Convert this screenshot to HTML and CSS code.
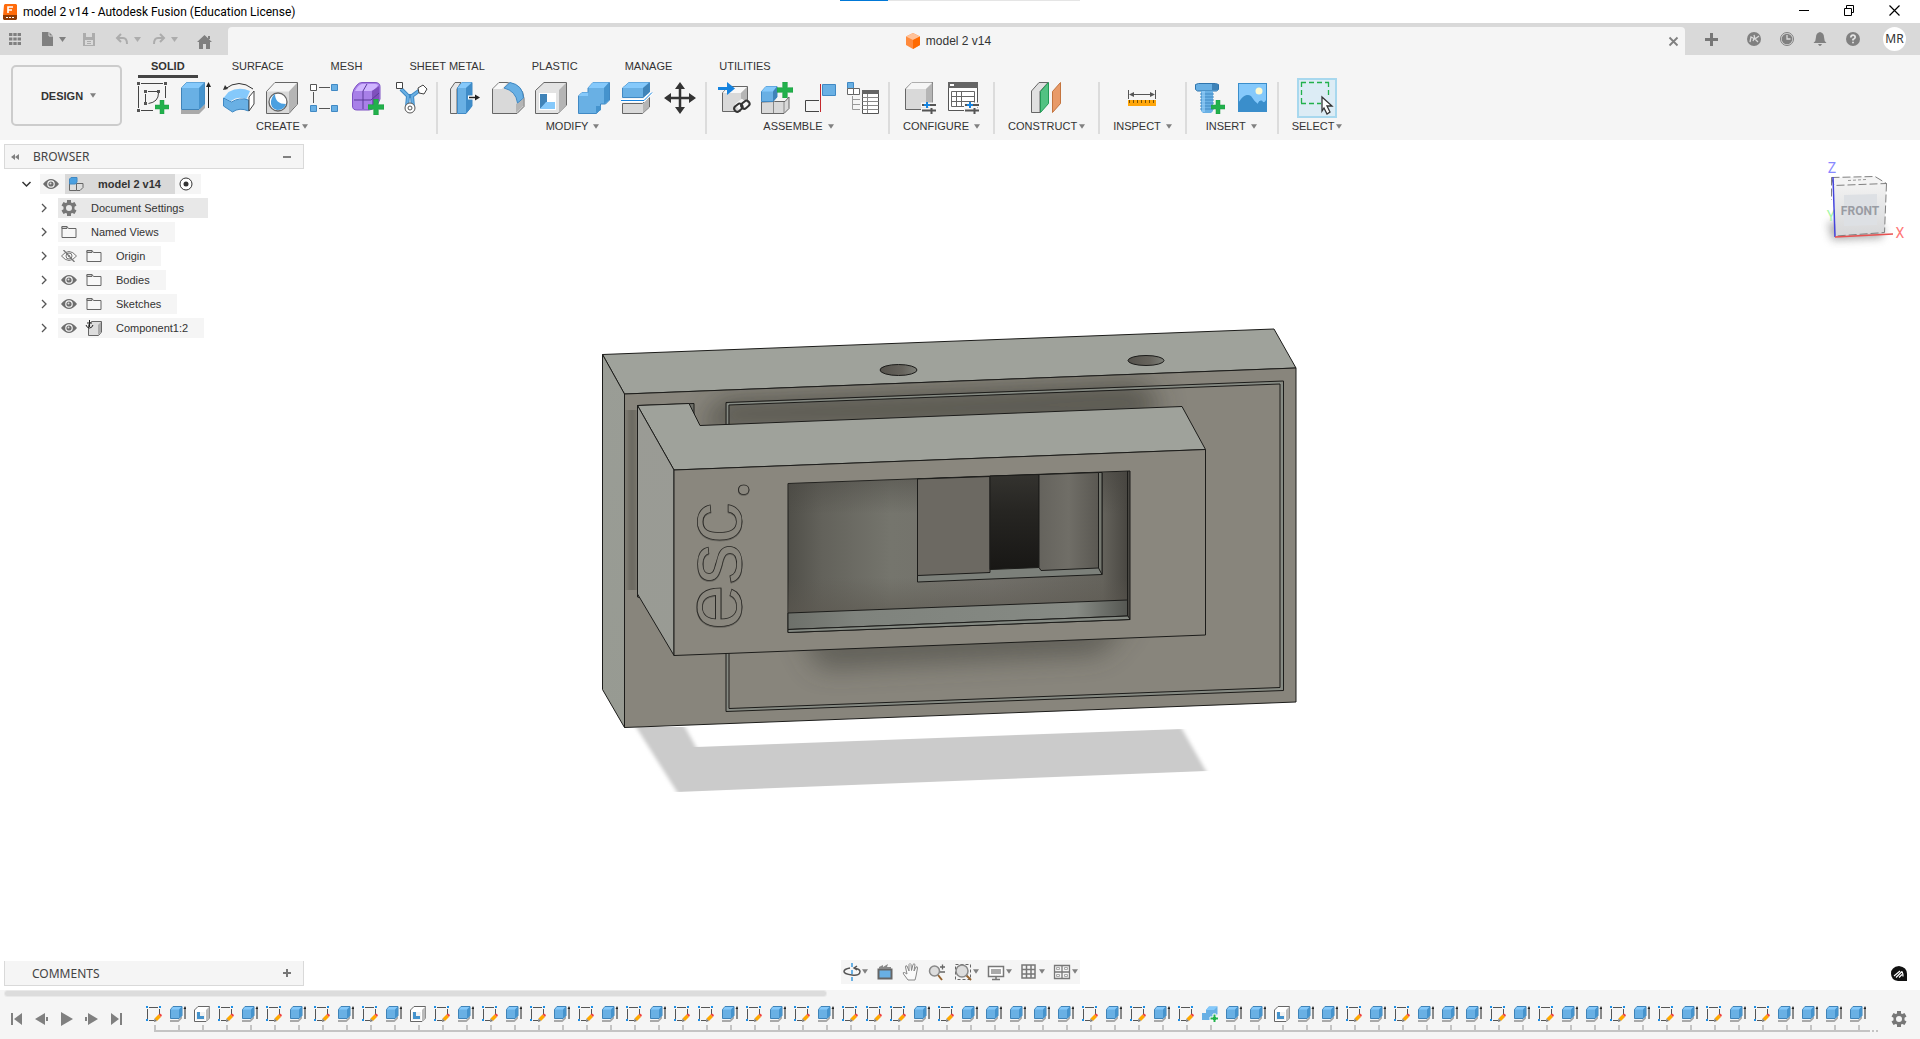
FILE: index.html
```html
<!DOCTYPE html>
<html lang="en">
<head>
<meta charset="utf-8">
<title>model 2 v14 - Autodesk Fusion (Education License)</title>
<link rel="stylesheet" href="styles.css">
</head>
<body>
<svg class="defs" aria-hidden="true">
  <symbol id="caret" viewBox="0 0 7 5"><path d="M0 0h7L3.500 5z" fill="#808080"/></symbol>
  <symbol id="plus" viewBox="0 0 14 14"><path d="M5 0h4v5h5v4H9v5H5V9H0V5h5z" fill="#22b14c" stroke="#1a9a40" stroke-width=".5"/></symbol>
  <symbol id="eye" viewBox="0 0 16 12"><path d="M0 6Q8-4 16 6Q8 16 0 6z" fill="#6e6e6e"/><circle cx="8" cy="6" r="3.800" fill="#f5f5f5"/><circle cx="8" cy="6" r="2.600" fill="#6e6e6e"/><circle cx="7.500" cy="5.500" r="1" fill="#ddd"/></symbol>
  <symbol id="eye-off" viewBox="0 0 16 12"><path d="M.5 6Q8-3 15.500 6Q8 15 .5 6z" fill="none" stroke="#777"/><circle cx="8" cy="6" r="3" fill="none" stroke="#777"/><circle cx="8" cy="6" r="1" fill="#777"/><path d="M2.500 0l11 12" stroke="#777" stroke-width="1.300"/></symbol>
  <symbol id="folder" viewBox="0 0 16 14"><path d="M1 12.500V1.500h5l1.500 2H15v9z" fill="#f7f7f7" stroke="#666"/><path d="M1 1.500h5v2H1z" fill="#ccc" stroke="#666"/></symbol>
  <symbol id="gear" viewBox="0 0 16 16"><path fill-rule="evenodd" fill="#777" d="M6 0h4v2.400l1.300.7L13.500 2l2 3.400-2 1.300v2.600l2 1.300-2 3.400-2.200-1.100-1.300.7V16H6v-2.400l-1.300-.7L2.500 14l-2-3.400 2-1.300V6.700l-2-1.300L2.500 2l2.200 1.100L6 2.400zM8 5a3 3 0 100 6 3 3 0 000-6z"/></symbol>
  <symbol id="chev" viewBox="0 0 6 10"><path d="M1 1l4 4-4 4" fill="none" stroke="#555" stroke-width="1.300"/></symbol>
  <symbol id="t-sketch" viewBox="0 0 16 16"><path d="M1.500 3v10M3 1.500h9M13.500 3v6M3 14.500h5" fill="none" stroke="#555"/><path d="M0 0h2v2H0zM13 0h2v2h-2zM0 13h2v2H0z" fill="#1e8fe6"/><path d="M8.500 12.500l4-4 2.500 2.500-4 4z" fill="#ffa800"/><path d="M12.500 8.500l1.500-1L16 9l-1 2z" fill="#f04040"/><path d="M8.500 12.500l2.500 2.500-3 1z" fill="#777"/></symbol>
  <symbol id="t-extrude" viewBox="0 0 16 16"><path d="M0 14h8l4-4v2.500L8.500 16H0z" fill="#a9a9a9"/><path d="M.5 3.500L3 .5h9v9L9 12.500H.5z" fill="#69b0e4" stroke="#3f83b8"/><path d="M1 3.500L3 1h9l-3 2.500z" fill="#85c9fb"/><path d="M9 3.500l3-3v9L9 12.500z" fill="#4593cd"/><path d="M15 2v11" stroke="#222"/><path d="M13.500 3L15 0l1.500 3z" fill="#222"/></symbol>
  <symbol id="t-shell" viewBox="0 0 16 16"><path d="M.5 4L4 .5h11.500V12L12 15.500H.5z" fill="#fff" stroke="#666"/><path d="M12 4l3.500-3.500V12L12 15.500z" fill="#bbb"/><path d="M2 6h9v8H2z" fill="#f2f2f2"/><path d="M3 6h3v4h4v3H3z" fill="#4593cd"/></symbol>
  <symbol id="t-combine" viewBox="0 0 16 16"><path d="M0 7h4V4l3-3.500h8.500V8l-4 6H0z" fill="#69b0e4"/><path d="M4 4l3-3.500h8.500L12 4z" fill="#85c9fb"/><path d="M11 8h3v3h3v3h-3v3h-3v-3H8v-3h3z" fill="#22b14c" stroke="#fff"/></symbol>
</svg>

<header>
  <div class="titlebar">
    <svg class="logo" width="14" height="16" viewBox="0 0 14 16"><path d="M1 1l1-1h11l1 1v11H0z" fill="#ff6b0b"/><path d="M0 11h14v4l-1 1H1l-1-1z" fill="#8e3a04"/><path d="M5 9V3h5M5 6h4" fill="none" stroke="#fff" stroke-width="1.600"/><path d="M3 13.500h8" stroke="#fff" stroke-dasharray="2 1"/></svg>
    <h1>model 2 v14 - Autodesk Fusion (Education License)</h1>
    <div class="progress"></div>
    <div class="window-buttons">
      <button aria-label="Minimize"><svg width="10" height="11"><path d="M0 5.500h10" stroke="#000"/></svg></button>
      <button aria-label="Restore"><svg width="10" height="11"><path d="M.5 3.500h7v7h-7zM2.500 3V.5h7v7H8" fill="none" stroke="#000"/></svg></button>
      <button aria-label="Close"><svg width="11" height="11"><path d="M.5.500l10 10M10.500.500l-10 10" stroke="#000" stroke-width="1.200"/></svg></button>
    </div>
  </div>

  <div class="tabbar">
    <div class="quick">
      <button aria-label="Data panel"><svg width="12" height="12"><path d="M0 1.500h12M0 6h12M0 10.500h12" stroke="#808080" stroke-width="3" stroke-dasharray="3.400 .9"/></svg></button>
      <button aria-label="File" class="q-file"><svg width="11" height="14"><path d="M0 0h7l4 4v10H0z" fill="#808080"/><path d="M7 0v4h4" fill="none" stroke="#d9d9d9"/></svg><svg width="7" height="5"><use href="#caret"/></svg></button>
      <button aria-label="Save" class="dim q-save"><svg width="12" height="13"><path fill="#808080" fill-rule="evenodd" d="M0 0h12v13H0zM3 0v4h6V0zM2 7v5h8V7zM4 8h4v1H4zM4 10h4v1H4z"/></svg></button>
      <button aria-label="Undo" class="dim"><svg width="12" height="10"><path d="M2 4h5q4 0 4 6M5 0L1 4l4 4" fill="none" stroke="#808080" stroke-width="2"/></svg><svg width="7" height="5"><use href="#caret"/></svg></button>
      <button aria-label="Redo" class="dim"><svg width="12" height="10"><path d="M10 4H5q-4 0-4 6M7 0l4 4-4 4" fill="none" stroke="#808080" stroke-width="2"/></svg><svg width="7" height="5"><use href="#caret"/></svg></button>
      <button aria-label="Home" class="q-home"><svg width="15" height="14"><path d="M7.500 0L15 7h-2v7H9V9H6v5H2V7H0zM11 1h2v3h-2z" fill="#808080"/></svg></button>
    </div>
    <div class="doc-tab">
      <div class="doc-name"><svg width="14" height="16"><path d="M7 0l7 3.500v8.500L7 16 0 12V3.500z" fill="#ff8a3c"/><path d="M7 0l7 3.500L7 7 0 3.500z" fill="#ffc299"/><path d="M7 7l7-3.500V12l-7 4z" fill="#ff6a00"/></svg><span>model 2 v14</span></div>
      <button aria-label="Close tab"><svg width="9" height="9"><path d="M.5.500l8 8M8.500.500l-8 8" stroke="#808080" stroke-width="1.800"/></svg></button>
    </div>
    <div class="account">
      <button aria-label="New tab" class="new"><svg width="13" height="13"><path d="M6.500 0v13M0 6.500h13" stroke="#777" stroke-width="3"/></svg></button>
      <button aria-label="Extensions"><svg width="14" height="14"><circle cx="7" cy="7" r="7" fill="#808080"/><path d="M3 10l1-5 3 1.500L6 9M7 3l1 4 4-3M8 7l3 3" fill="none" stroke="#d9d9d9" stroke-width="1.300"/></svg></button>
      <button aria-label="Job status"><svg width="14" height="14"><circle cx="7" cy="7" r="6.500" fill="none" stroke="#808080"/><circle cx="7" cy="7" r="5.300" fill="#808080"/><path d="M7 3v4h3.500" fill="none" stroke="#d9d9d9" stroke-width="1.300"/></svg></button>
      <button aria-label="Notifications"><svg width="14" height="14"><path d="M7 0q4 1 4 5 0 4 2.500 6H.500Q3 9 3 5 3 1 7 0zM5 12h4q-2 4-4 0z" fill="#808080"/></svg></button>
      <button aria-label="Help"><svg width="14" height="14"><circle cx="7" cy="7" r="7" fill="#808080"/><path d="M4.800 5.500Q5 3.200 7 3.200T9.200 5.200Q9.200 6.300 7 7.400V8.600M7 9.700v1.600" fill="none" stroke="#e5e5e5" stroke-width="1.700"/></svg></button>
      <button class="avatar">MR</button>
    </div>
  </div>

  <div class="toolbar">
    <button class="workspace">DESIGN <svg width="6" height="5"><use href="#caret" width="6" height="5"/></svg></button>
    <div class="ribbon">
      <nav class="tabs">
        <a href="#solid" class="active">SOLID</a><a href="#surface">SURFACE</a><a href="#mesh">MESH</a><a href="#sheet">SHEET METAL</a><a href="#plastic">PLASTIC</a><a href="#manage">MANAGE</a><a href="#utilities">UTILITIES</a>
      </nav>
      <div class="groups">
        <section class="group">
          <div class="tools">
            <button aria-label="Create Sketch"><svg width="32" height="32"><path d="M4 1.500h22M28.500 4v12M1.500 4v22M4 28.500h12M11 9.500h10M8.500 12v9M21.500 11q0 9-10 10.500" fill="none" stroke="#444"/><path d="M0 0h3v3H0zM27 0h3v3h-3zM0 27h3v3H0zM7 8h3v3H7zM20 8h3v3h-3zM7 20h3v3H7z" fill="#555"/><use href="#plus" x="18" y="18" width="14" height="14"/></svg></button>
            <button aria-label="Extrude"><svg width="32" height="32"><path d="M1 28h18l6-6v4l-6 6H1z" fill="#aaa"/><path d="M1.500 6l5-5.500h18V22L19 27.500H1.500z" fill="#69b0e4" stroke="#3f83b8"/><path d="M1.500 6l5-5.500h18L19 6z" fill="#85c9fb"/><path d="M19 6l5.500-5.500V22L19 27.500z" fill="#4593cd"/><path d="M28.500 3v23" stroke="#222"/><path d="M26 5l2.500-5L31 5z" fill="#222"/></svg></button>
            <button aria-label="Revolve"><svg width="32" height="32"><path d="M2 7Q16-4 30 7" fill="none" stroke="#333"/><path d="M0 8l2-5 3 4z" fill="#333"/><path d="M.5 16l5-6Q16 4 27 9l-4 9Q16 13 8 19z" fill="#85c9fb"/><path d="M.5 16l8 4q8-5 17-2v11q-9-4-16 1l-9-6z" fill="#69b0e4" stroke="#4089c4"/><path d="M26 15l5-6v13l-5 7z" fill="#fff" stroke="#444"/></svg></button>
            <button aria-label="Hole"><svg width="32" height="32"><path d="M.5 9.500L9 .5h22.500V22L23 31.500H.5z" fill="#d9d9d9" stroke="#666"/><path d="M1 9.500L9 1h22l-8 8.500z" fill="#f5f5f5"/><path d="M23 9.500L31 1v21l-8 9z" fill="#b5b5b5"/><circle cx="12" cy="20" r="9" fill="#fff" stroke="#666" stroke-width="1.300"/><path d="M9 12q0 10 11 10-2 6-9 6-7-2-6-9 1-5 4-7z" fill="#4ba0e0"/></svg></button>
            <button aria-label="Pattern"><svg width="32" height="32"><path d="M10 5.500h11M4.500 10v11M10 26.500h11" stroke="#555"/><path d="M1.500 2.500h6v6h-6z" fill="#fff" stroke="#555"/><path d="M22.500 2.500h6v6h-6zM1.500 23.500h6v6h-6zM22.500 23.500h6v6h-6z" fill="#69b0e4" stroke="#4089c4"/></svg></button>
            <button aria-label="Create Form"><svg width="32" height="32"><path d="M.5 12Q1 7 5 3q2-2.500 5-2.500h13q5 0 5 4V17q-1 4-5 8-3 3-6 3H5q-4.500 0-4.500-4z" fill="#a880e8" stroke="#7e52c4"/><path d="M3 9q3-6 7-7h13q2 0 3 1-2 5-7 6z" fill="#d0b5ff"/><path d="M20 9l7-5v13l-7 8z" fill="#7f50bd"/><path d="M2 18h17l8-7M11 9v18M11 9l4-7" fill="none" stroke="#5b3a99"/><use href="#plus" x="16" y="17" width="16" height="16"/></svg></button>
            <button aria-label="Derive"><svg width="32" height="32"><path d="M6 7l7 7-1 11M25 8l-8 6 1 11M13 14h4" fill="none" stroke="#4089c4" stroke-width="4"/><path d="M6 7l7 7-1 11M25 8l-8 6 1 11" fill="none" stroke="#69b0e4" stroke-width="2"/><path d="M1.500.5h6v6h-6zM28 3l4 4-3 5-5-1-1-5z" fill="#fff" stroke="#444"/><circle cx="15" cy="26" r="5" fill="#fff" stroke="#555"/><circle cx="15" cy="26" r="2" fill="none" stroke="#555"/></svg></button>
          </div>
          <button class="label">CREATE<svg width="6" height="5"><use href="#caret" width="6" height="5"/></svg></button>
        </section>
        <section class="group">
          <div class="tools">
            <button aria-label="Press Pull"><svg width="32" height="32"><path d="M1.500 7L6 .5h6L8 7v24.500H1.500z" fill="#e6e6e6" stroke="#666"/><path d="M8.500 6L13 .5h10V24l-6 7.500H8.500z" fill="#69b0e4" stroke="#4089c4"/><path d="M8.500 6L13 .5h10L17 6z" fill="#85c9fb"/><path d="M17 6l6-5.500V24l-6 7.500z" fill="#3f8cc8"/><path d="M19 15.500h9" stroke="#fff" stroke-width="4"/><path d="M20 15.500h7" stroke="#222" stroke-width="1.500"/><path d="M26 12.500l5 3-5 3z" fill="#222"/></svg></button>
            <button aria-label="Fillet"><svg width="32" height="32"><path d="M.5 7L7 .5h8q16 2 17 16v8l-7 7H.5z" fill="#d9d9d9" stroke="#666"/><path d="M1 7L7 1h8l-5 6z" fill="#f8f8f8"/><path d="M24 22l7-5v7l-7 7z" fill="#b5b5b5"/><path d="M12 6l6-5.500Q31 3 31.500 16l-6 5Q24 9 12 6z" fill="#69b0e4" stroke="#4089c4"/></svg></button>
            <button aria-label="Shell"><svg width="32" height="32"><path d="M.5 8.500L9 .5h22.500V23L23 31.500H.5z" fill="#e3e3e3" stroke="#666"/><path d="M24 8l7-7v22l-7 8z" fill="#b5b5b5"/><path d="M4 11h17v17H4z" fill="#fff"/><path d="M5 12h7v9l-7 6z" fill="#3f83b8"/><path d="M5 27l6-7h9v7z" fill="#85c9fb"/></svg></button>
            <button aria-label="Combine"><svg width="32" height="32"><path d="M.5 14L4 10.500h6V6l5-5.500h16.500V18l-4 4h-5v5l-4 4.500H.5z" fill="#69b0e4" stroke="#4089c4"/><path d="M10 6l5-5.500h16L26 6zM.5 14L4 10.500h6V14z" fill="#85c9fb"/><path d="M26 6l5-5.500V18l-5 4zM18 24h5v4l-5 3z" fill="#4593cd"/></svg></button>
            <button aria-label="Split Body"><svg width="32" height="32"><path d="M1.500 21.500h20l7-6V25l-7 6.500h-20z" fill="#d9d9d9" stroke="#666"/><path d="M22 22l6-6v9l-6 6z" fill="#b5b5b5"/><path d="M1.500 6L8 .5h20.500V10L22 15.500H1.500z" fill="#69b0e4" stroke="#4089c4"/><path d="M1.500 6L8 .5h20L22 6z" fill="#85c9fb"/><path d="M22 6l6.500-5.500V10L22 15.500z" fill="#3f83b8"/><path d="M0 18.500h23l8-8" fill="none" stroke="#fff" stroke-width="3"/><path d="M0 18.500h23l8-8" fill="none" stroke="#1583df"/></svg></button>
            <button aria-label="Move"><svg width="32" height="32"><path d="M16 4v24M4 16h24" stroke="#333" stroke-width="2.500"/><path d="M16 0l5 7H11zM16 32l5-7H11zM0 16l7-5v10zM32 16l-7-5v10z" fill="#333"/></svg></button>
          </div>
          <button class="label">MODIFY <svg width="6" height="5"><use href="#caret" width="6" height="5"/></svg></button>
        </section>
        <section class="group">
          <div class="tools">
            <button aria-label="Insert Component"><svg width="32" height="32"><path d="M4.500 11l6-6.500h19V24l-6 5.500h-19z" fill="#d9d9d9" stroke="#666"/><path d="M5 11l5-6h19l-6 6z" fill="#f8f8f8"/><path d="M23 11l6-6v19l-6 5z" fill="#b5b5b5"/><path d="M0 6.500h9" stroke="#1583df" stroke-width="3"/><path d="M9 0l8 6.500L9 13z" fill="#1583df"/><path d="M19 25l5-4 3 2-1 4M30 22l-5 5-2-2" fill="none" stroke="#f5f5f5" stroke-width="7"/><rect x="16" y="23" width="9" height="6" rx="3" fill="none" stroke="#333" stroke-width="2" transform="rotate(-40 20 26)"/><rect x="23" y="20" width="9" height="6" rx="3" fill="none" stroke="#333" stroke-width="2" transform="rotate(-40 27 23)"/></svg></button>
            <button aria-label="New Component"><svg width="32" height="32"><path d="M.5 20v11.500H23l5-5V15l-4 4.500H13.500z" fill="#d9d9d9" stroke="#666"/><path d="M12.500 20v11M23 20v11" stroke="#888"/><path d="M.5 9.500L5 4.500h11V15l-4 4.500H.5z" fill="#69b0e4" stroke="#4089c4"/><path d="M.5 9.500L5 4.500h11l-4 5z" fill="#85c9fb"/><path d="M12 9.500l4-5V15l-4 4.500z" fill="#3f83b8"/><use href="#plus" x="16" y="0" width="16" height="16"/></svg></button>
            <button aria-label="Joint"><svg width="32" height="32"><path d="M15 18.500H1.500v11H15" fill="none" stroke="#444"/><path d="M18.500 2.500h13v11h-13z" fill="#69b0e4" stroke="#4089c4"/><path d="M16.500 2v28" stroke="#c4282d"/></svg></button>
            <button aria-label="Bill of Materials"><svg width="32" height="32"><path d="M.5.500h6v6h-6z" fill="#69b0e4" stroke="#4089c4"/><path d="M.5 6.500h6v6h-6zM6.500 6.500h6v6h-6z" fill="#fff" stroke="#666"/><path d="M5.500 14v13.500H13M5.500 17.500H13M5.500 22.500H13" fill="none" stroke="#999"/><path d="M15.500 9.500h16v22h-16z" fill="#fff" stroke="#555"/><path d="M15 8h17v4H15z" fill="#666"/><path d="M15.500 15.500h16M15.500 19.500h16M15.500 23.500h16M15.500 27.500h16M20.500 12v19" stroke="#888"/></svg></button>
          </div>
          <button class="label">ASSEMBLE <svg width="6" height="5"><use href="#caret" width="6" height="5"/></svg></button>
        </section>
        <section class="group wide">
          <div class="tools">
            <button aria-label="Configure"><svg width="32" height="32"><path d="M1.500 7L8 .5h20.500V21L22 27.500H1.500z" fill="#d9d9d9" stroke="#666"/><path d="M2 7l6-6.500h20L22 7z" fill="#f6f6f6"/><path d="M22 7l6.500-6V21L22 27z" fill="#b5b5b5"/><path d="M17 23h16M17 28.500h16" stroke="#f5f5f5" stroke-width="5"/><path d="M18 23h14M18 28.500h14M27.500 26v6" stroke="#555" stroke-width="2"/><path d="M23 20v6M20 23h6" stroke="#1583df" stroke-width="2"/></svg></button>
            <button aria-label="Configuration Table"><svg width="32" height="32"><path d="M1.500.5h29v28h-29z" fill="#fff" stroke="#555"/><path d="M1 0h30v6H1z" fill="#666"/><path d="M3 2h4v2H3z" fill="#fff"/><path d="M4.500 9.500h23v15h-23zM4.500 14.500h23M4.500 19.500h23M9.500 9v15M14.500 9v15" fill="none" stroke="#666"/><path d="M17 23h16M17 28.500h16" stroke="#f5f5f5" stroke-width="5"/><path d="M18 23h14M18 28.500h14M27.500 26v6" stroke="#555" stroke-width="2"/><path d="M23 20v6M20 23h6" stroke="#1583df" stroke-width="2"/></svg></button>
          </div>
          <button class="label">CONFIGURE <svg width="6" height="5"><use href="#caret" width="6" height="5"/></svg></button>
        </section>
        <section class="group wide">
          <div class="tools">
            <button aria-label="Construct Plane"><svg width="32" height="32"><path d="M.5 9L8 .5h9l-8 9v21H.5z" fill="#e0e0e0" stroke="#666"/><path d="M9.500 9.500l8-9v21l-8 9z" fill="#52c282" stroke="#239a56"/><path d="M21.500 9.500l8-9v21l-8 9z" fill="#e89a68" stroke="#c4743e"/></svg></button>
          </div>
          <button class="label">CONSTRUCT<svg width="6" height="5"><use href="#caret" width="6" height="5"/></svg></button>
        </section>
        <section class="group wide">
          <div class="tools">
            <button aria-label="Measure"><svg width="32" height="32"><path d="M2.500 8v9M29.500 8v9M6 12.500h20" stroke="#555"/><path d="M3 12.500l5-2.500v5zM29 12.500L24 10v5z" fill="#555"/><path d="M2 18h28v6H2z" fill="#ffa60a"/><path d="M3 19.500h26" stroke="#7a5200" stroke-width="3" stroke-dasharray="1 3"/></svg></button>
          </div>
          <button class="label">INSPECT <svg width="6" height="5"><use href="#caret" width="6" height="5"/></svg></button>
        </section>
        <section class="group narrow">
          <div class="tools">
            <button aria-label="Insert Fastener"><svg width="32" height="32"><path d="M1.500 2.500l3-1h17l3 1v5l-2 1.500h-19l-2-1.500z" fill="#69b0e4" stroke="#2f75ad"/><path d="M18 2h6v6h-6z" fill="#3f83b8"/><path d="M7 9h12v20l-2 2H9l-2-2z" fill="#69b0e4"/><path d="M6 12h14M6 15h14M6 18h14M6 21h14M6 24h14M6 27h14" stroke="#4089c4"/><path d="M8 9h3v21H8z" fill="#9cd3fb" opacity=".6"/><use href="#plus" x="17" y="18" width="14" height="14"/></svg></button>
            <button aria-label="Canvas"><svg width="32" height="32"><path d="M1 1h29v29H1z" fill="#3a8ecb"/><path d="M2 2h27v16q-2 4-5 1-2-1-3 3-4-3-7-8-5-3-8 3l-4 3z" fill="#85c9fb"/><path d="M2 20Q8 10 13 15q4 4 7 8 4-7 6-3l3 2v7H2z" fill="#3a8ecb"/><circle cx="22" cy="9" r="3.500" fill="#fffad0"/></svg></button>
          </div>
          <button class="label">INSERT <svg width="6" height="5"><use href="#caret" width="6" height="5"/></svg></button>
        </section>
        <section class="group wide last">
          <div class="tools">
            <button aria-label="Select" class="selected"><svg width="36" height="36"><path d="M2 2.500h28M2 23.500h20M2.500 2v21M29.500 2v14" fill="none" stroke="#22b14c" stroke-width="1.300" stroke-dasharray="5 3"/><path d="M23 17l10 9h-5l3 6-3 2-3-6-2 3z" fill="#fff" stroke="#333" stroke-width="1.300"/></svg></button>
          </div>
          <button class="label">SELECT<svg width="6" height="5"><use href="#caret" width="6" height="5"/></svg></button>
        </section>
      </div>
    </div>
  </div>
</header>

<main>
  <svg class="model" viewBox="0 140 1920 850" role="img" aria-label="Model view">
    <defs>
      <filter id="soft" x="-20%" y="-80%" width="140%" height="260%"><feGaussianBlur stdDeviation="14 12"/></filter>
      <filter id="soft2" x="-100%" width="300%"><feGaussianBlur stdDeviation="2 0"/></filter>
      <clipPath id="face"><path d="M624 394L1296 368V702L624 727z"/></clipPath>
      <linearGradient id="side" x2="0" y2="1"><stop offset="0" stop-color="#9a9d96"/><stop offset="1" stop-color="#979a92"/></linearGradient>
      <linearGradient id="side2" x2="0" y2="1"><stop offset="0" stop-color="#9a9b95"/><stop offset="1" stop-color="#999b94"/></linearGradient>
      <linearGradient id="hole"><stop offset="0" stop-color="#55524c"/><stop offset=".6" stop-color="#66635c"/><stop offset="1" stop-color="#7d7f78"/></linearGradient>
      <linearGradient id="wall"><stop offset="0" stop-color="#504f49"/><stop offset=".1" stop-color="#63625b"/><stop offset=".3" stop-color="#75756d"/><stop offset=".6" stop-color="#72706a"/><stop offset=".92" stop-color="#65635c"/><stop offset="1" stop-color="#46443f"/></linearGradient>
      <linearGradient id="wallv" x2="0" y2="1"><stop offset="0" stop-color="#45433e" stop-opacity=".5"/><stop offset=".3" stop-color="#45433e" stop-opacity="0"/><stop offset=".75" stop-color="#5c5850" stop-opacity="0"/><stop offset="1" stop-color="#5c5850" stop-opacity=".6"/></linearGradient>
      <linearGradient id="floor"><stop offset="0" stop-color="#6d706a"/><stop offset=".2" stop-color="#7f837d"/><stop offset=".85" stop-color="#868a84"/><stop offset="1" stop-color="#555752"/></linearGradient>
      <linearGradient id="panel"><stop offset="0" stop-color="#65635d"/><stop offset=".5" stop-color="#706e67"/><stop offset="1" stop-color="#5a5852"/></linearGradient>
      <linearGradient id="slot" x2="0" y2="1"><stop offset="0" stop-color="#34332f"/><stop offset=".4" stop-color="#262522"/><stop offset="1" stop-color="#181715"/></linearGradient>
    </defs>
    <path d="M636 727H685L696 747L1182 729L1206 771L677 792z" fill="#cbcbcb" filter="url(#soft2)"/>
    <g stroke="#1c1c1a" stroke-linejoin="round">
      <path d="M602.500 354.500L1274 329L1296 368L624.500 394z" fill="#9fa29b"/>
      <path d="M602.500 354.500L624.500 394V727.500L602.500 689.500z" fill="url(#side)"/>
      <path d="M624.500 394L1296 368V702L624.500 727.500z" fill="#88857c"/>
    </g>
    <g clip-path="url(#face)">
      <path d="M720 398L1140 380L1160 400L1150 425L700 432z" fill="#33312c" opacity=".5" filter="url(#soft)"/>
      <path d="M800 630L1130 620L1100 655L820 670z" fill="#3c3e38" opacity=".5" filter="url(#soft)"/>
      <path d="M627 410H637V590H627z" fill="#33312c" opacity=".3" filter="url(#soft2)"/>
    </g>
    <g fill="none" stroke="#1c1c1a">
      <path d="M727.500 404L1281.500 382.500M727.500 710L1281.500 689M727.500 404V710M1282 383V689" stroke="#858a83" stroke-width="2"/>
      <path d="M726 402.500L1283.500 381V690.500L726 711.500z"/>
      <path d="M729 405L1280 384V687.500L729 708.500z"/>
      <ellipse cx="898.500" cy="370" rx="18.500" ry="5.500" fill="url(#hole)"/>
      <ellipse cx="1146" cy="360.500" rx="18" ry="5" fill="url(#hole)"/>
      <path d="M637.500 405.500L694 403.500V420" fill="#6f7069"/>
      <path d="M637.500 590V597L641 598"/>
    </g>
    <g stroke="#1c1c1a" stroke-linejoin="round">
      <path d="M637.500 405.500L689 403.500L700 425.500L1182 406.500L1205.500 449.500L674 470z" fill="#9fa29b"/>
      <path d="M637.500 405.500L674 470V655.500L637.500 594z" fill="url(#side2)"/>
      <path d="M674 470L1205.500 449.500V635L674 655.500z" fill="#8a877e"/>
      <path d="M788 483.500L1130 471V619.500L788 632.500z" fill="url(#wall)"/>
      <path d="M788 483.500L1127 471.500V600L788 613z" fill="url(#wallv)" stroke="none"/>
      <path d="M788 613L1127.500 600V616L788 629.500z" fill="url(#floor)"/>
      <path d="M788 629.500L1128 616L1130 619.500L788 632.500z" fill="#858a83"/>
      <path d="M917.500 479L1102 472.500V574.500L917.500 582z" fill="#7c807a"/>
      <path d="M917.500 479L990 476.500V572.500L917.500 575.500z" fill="#6c6962"/>
      <path d="M990 476L1039 474.500V567.500L990 569.500z" fill="url(#slot)"/>
      <path d="M1041 474.500L1098.500 472.500V568L1041 570.500L1039 567.500V474.500z" fill="url(#panel)"/>
      <path d="M1098.500 472.500V568L1102 574.500V472.500z" fill="#74776f"/>
      <path d="M1127.500 471V616" fill="none"/>
    </g>
    <text class="engraving" transform="translate(741 630) rotate(-90)">esc<tspan class="dot" dx="2" dy="7">.</tspan></text>
  </svg>

  <section class="panel browser">
    <div class="panel-head">
      <svg width="8" height="6"><path d="M4 0v6L0 3zM8 0v6L4 3z" fill="#808080"/></svg>
      <h2>BROWSER</h2>
      <button aria-label="Collapse"><svg width="8" height="8"><path d="M0 4h8" stroke="#808080" stroke-width="2"/></svg></button>
    </div>
    <ul class="tree">
      <li class="root"><svg class="chev" width="9" height="6"><path d="M.5 1l4 4 4-4" fill="none" stroke="#333" stroke-width="1.500"/></svg>
        <span class="cell"><svg width="16" height="12"><use href="#eye"/></svg><span class="name"><svg width="15" height="14"><path d="M.5 6.500h7v7h-7zM7.500 6.500h6.500v4l-3 3H7.500" fill="#ddd" stroke="#666"/><path d="M.5 2L2 .500h6V5L6.500 7h-6z" fill="#4ba0e0" stroke="#4089c4"/></svg><b>model 2 v14</b></span><svg width="14" height="14"><circle cx="7" cy="7" r="6" fill="#fff" stroke="#333"/><circle cx="7" cy="7" r="2.500" fill="#333"/></svg></span></li>
      <li><svg class="chev" width="6" height="10"><use href="#chev"/></svg><span class="cell settings"><svg width="16" height="16"><use href="#gear"/></svg><span>Document Settings</span></span></li>
      <li><svg class="chev" width="6" height="10"><use href="#chev"/></svg><span class="cell"><svg width="16" height="14"><use href="#folder"/></svg><span>Named Views</span></span></li>
      <li><svg class="chev" width="6" height="10"><use href="#chev"/></svg><span class="cell"><svg width="16" height="12"><use href="#eye-off"/></svg><svg width="16" height="14"><use href="#folder"/></svg><span>Origin</span></span></li>
      <li><svg class="chev" width="6" height="10"><use href="#chev"/></svg><span class="cell"><svg width="16" height="12"><use href="#eye"/></svg><svg width="16" height="14"><use href="#folder"/></svg><span>Bodies</span></span></li>
      <li><svg class="chev" width="6" height="10"><use href="#chev"/></svg><span class="cell"><svg width="16" height="12"><use href="#eye"/></svg><svg width="16" height="14"><use href="#folder"/></svg><span>Sketches</span></span></li>
      <li><svg class="chev" width="6" height="10"><use href="#chev"/></svg><span class="cell"><svg width="16" height="12"><use href="#eye"/></svg><svg width="16" height="16"><path d="M2.500 5l3-3.500h10V12l-3 3.500h-10z" fill="#ddd" stroke="#666"/><path d="M12 5l3-3v10l-3 3z" fill="#aaa"/><path d="M3.500 0v7M1 3h5M0 5q1 3 3.500 3T7 5" fill="none" stroke="#222"/></svg><span>Component1:2</span></span></li>
    </ul>
  </section>

  <svg class="viewcube" width="100" height="100" viewBox="1815 155 100 100" role="img" aria-label="View cube">
    <defs><filter id="cs" x="-30%" y="-80%" width="160%" height="260%"><feGaussianBlur stdDeviation="4"/></filter><linearGradient id="cf" x2="0" y2="1"><stop offset="0" stop-color="#f2f2f2"/><stop offset="1" stop-color="#d6d7d9"/></linearGradient></defs>
    <path d="M1828 222L1884 226L1882 238L1832 240z" fill="#777" opacity=".6" filter="url(#cs)"/>
    <text class="cube-y" x="1831" y="221">Y</text>
    <path d="M1831.500 177.500L1875 176.500L1886.500 183.500L1834 185.500z" fill="#f4f4f4"/>
    <path d="M1834 185.500L1886.500 183.500L1884.500 232.500L1835.500 236.500z" fill="url(#cf)"/>
    <path d="M1844 195L1877 194V225L1844 226z" fill="#dde0e4"/>
    <path d="M1831.500 177.500L1875 176.500L1886.500 183.500L1834 185.500zM1886.500 183.500L1884.500 232.500L1836 236M1831.500 177.500V200" fill="none" stroke="#808080" stroke-dasharray="8 3"/>
    <path d="M1848 180.500l18-1" stroke="#999" stroke-dasharray="3 2"/>
    <path d="M1833 177L1835 237" stroke="#4444dd" stroke-width="1.500"/><path d="M1835 237L1893 234" stroke="#e85050" stroke-width="1.700"/>
    <text class="cube-face" x="1860" y="215">FRONT</text><text class="cube-z" x="1832" y="173">Z</text><text class="cube-x" x="1900" y="238">X</text>
  </svg>

  <div class="bottom">
    <section class="panel comments">
      <div class="panel-head"><h2>COMMENTS</h2><button aria-label="Add comment"><svg width="8" height="8"><path d="M0 4h8M4 0v8" stroke="#777" stroke-width="2"/></svg></button></div>
    </section>
    <div class="navbar">
      <button aria-label="Orbit"><svg width="18" height="18"><path d="M9 0v4M9 7v4M9 14v4" stroke="#69b0e4" stroke-width="2"/><path d="M7 5Q1 6 1 8.500T9 12t8-3.500Q17 6 11 5M14 3l-3 2 3 2" fill="none" stroke="#555" stroke-width="1.500"/></svg><svg width="6" height="5"><use href="#caret"/></svg></button>
      <button aria-label="Look At"><svg width="18" height="18"><path d="M2.500 6.500h13v9h-13z" fill="#69b0e4" stroke="#666" stroke-width="2"/><path d="M3 4l4-2v2l5-3-1 3h4v2H3z" fill="#888"/></svg></button>
      <button aria-label="Pan"><svg width="18" height="18"><path d="M6 17L1.500 11q-1-2 1-1.500L5 11 3.500 4q0-2 1.500-1l2 5L7 1.500q1-2 2 0l.5 6L11 1.500q1-1.500 2 0L12 8l2-4q1.500-1 1.500 1L14 13l-1 4z" fill="#fafafa" stroke="#888"/></svg></button>
      <button aria-label="Zoom"><svg width="18" height="18"><path d="M10 12l4 5" stroke="#96632e" stroke-width="2"/><circle cx="6.500" cy="8" r="5" fill="#ddd" stroke="#888" stroke-width="1.500"/><path d="M12 4h5M14.500 1.500v5M12 9h5" stroke="#666" stroke-width="1.300"/></svg></button>
      <button aria-label="Fit"><svg width="18" height="18"><path d="M1.500 1.500h15v15h-15z" fill="none" stroke="#666" stroke-dasharray="3 2"/><path d="M12 12l5 5" stroke="#96632e" stroke-width="2"/><circle cx="8" cy="8" r="6" fill="#ddd" stroke="#888" stroke-width="1.500"/></svg><svg width="6" height="5"><use href="#caret"/></svg></button>
      <button aria-label="Display Settings"><svg width="18" height="18"><path d="M1.500 3.500h15v10h-15z" fill="#fff" stroke="#777" stroke-width="1.500"/><path d="M4 6h10v5H4z" fill="#aaa"/><path d="M9 14v2M5 16.500h8" stroke="#777" stroke-width="1.500"/></svg><svg width="6" height="5"><use href="#caret"/></svg></button>
      <button aria-label="Grid"><svg width="18" height="18"><path d="M2 2h13v13H2zM2 6.500h13M2 11h13M6.500 2v13M11 2v13" fill="none" stroke="#777" stroke-width="1.500"/></svg><svg width="6" height="5"><use href="#caret"/></svg></button>
      <button aria-label="Viewports"><svg width="18" height="18"><path d="M1.500 2.500h15v13h-15zM9 2v14M1 9h16" fill="none" stroke="#777" stroke-width="1.300"/><path d="M3.500 4.500h3v2h-3zM11.500 4.500h3v2h-3zM3.500 11.500h3v2h-3zM11.500 11.500h3v2h-3z" fill="none" stroke="#aaa"/></svg><svg width="6" height="5"><use href="#caret"/></svg></button>
    </div>
    <button class="assistant" aria-label="Assistant"><svg width="16" height="15"><path d="M8 0q8 1 8 8v7H7Q0 14 0 7.500 0 1 8 0z" fill="#111"/><path d="M3 10l6-5M5 11.500l6-6M8 11.500l3-3M11 5.500q1 2 1 5" fill="none" stroke="#fff" stroke-width="1.200"/></svg></button>
  </div>
</main>

<footer>
  <div class="scroll"><div class="thumb"></div></div>
  <div class="timeline">
    <div class="play">
      <button aria-label="Go to start"><svg width="12" height="12"><path d="M0 0h2v12H0zM11 0v12L3 6z" fill="#808080"/></svg></button>
      <button aria-label="Step back"><svg width="13" height="12"><path d="M10 0v12L0 6zM11 4h2v4h-2z" fill="#808080"/></svg></button>
      <button aria-label="Play"><svg width="12" height="14"><path d="M0 0l12 7-12 7z" fill="#808080"/></svg></button>
      <button aria-label="Step forward"><svg width="13" height="12"><path d="M3 0v12l10-6zM0 4h2v4H0z" fill="#808080"/></svg></button>
      <button aria-label="Go to end"><svg width="12" height="12"><path d="M9 0h2v12H9zM0 0v12l8-6z" fill="#808080"/></svg></button>
    </div>
    <ol class="features" id="features"></ol>
    <button class="prefs" aria-label="Timeline settings"><svg width="16" height="16"><use href="#gear"/></svg></button>
  </div>
</footer>
<script src="timeline.js"></script>
</body>
</html>
```
FILE: styles.css
```css
* { box-sizing: border-box; }
body {
  margin: 0;
  min-height: 100vh;
  display: flex;
  flex-direction: column;
  background: #fff;
  color: #333;
  font: 11px/16px "Liberation Sans", Arial, sans-serif;
  overflow: hidden;
}
svg { display: block; flex: none; overflow: visible; }
.defs { width: 0; height: 0; position: absolute; }
button {
  border: 0;
  padding: 0;
  background: none;
  color: inherit;
  font: inherit;
  display: flex;
  align-items: center;
  justify-content: center;
}
h1, h2, ul, ol { margin: 0; padding: 0; font-weight: 400; list-style: none; }

/* title bar */
.titlebar { position: relative; display: flex; align-items: center; height: 23px; padding: 0 20px 0 3px; }
.titlebar h1 { margin: 0 auto 0 6px; font: 12px/16px Roboto, sans-serif; color: #000; }
.progress {
  position: absolute;
  top: 0;
  left: 840px;
  width: 240px;
  height: 1px;
  background: linear-gradient(90deg, #0078d7 20%, #e5e5e5 20%);
}
.window-buttons { display: flex; gap: 35px; margin-bottom: 3px; }

/* document tabs */
.tabbar { display: flex; height: 32px; background: #d9d9d9; }
.quick { width: 228px; display: flex; align-items: center; padding-left: 9px; gap: 12px; }
.quick button { gap: 6px; }
.quick .q-file { margin-left: 9px; }
.quick .q-save { margin: 0 9px 0 5px; }
.quick .q-home { margin: 6px 0 0 7px; }
.dim { opacity: .5; }
.doc-tab {
  flex: 1;
  display: flex;
  align-items: center;
  margin-top: 4px;
  padding-right: 7px;
  background: #f5f5f5;
  border-radius: 4px 4px 0 0;
}
.doc-name { flex: 1; display: flex; align-items: center; justify-content: center; gap: 6px; font-size: 12px; }
.account { width: 235px; display: flex; align-items: center; gap: 19px; padding: 0 14px 0 20px; }
.account .new { margin-right: 10px; }
.avatar { width: 24px; height: 24px; border-radius: 50%; background: #fff; font: 12px/24px "Noto Sans", sans-serif; }
.account .avatar { margin-left: 4px; }

/* ribbon */
.toolbar { display: flex; height: 85px; padding-left: 11px; background: #f5f5f5; }
.workspace {
  width: 111px;
  height: 61px;
  margin: 10px 5px 0 0;
  padding-left: 4px;
  gap: 7px;
  border: 2px solid #ccc;
  border-radius: 5px;
  font-weight: 700;
}
.tabs { display: flex; gap: 21px; padding-left: 11px; }
.tabs a {
  height: 23px;
  padding: 2px 13px 0;
  line-height: 18px;
  color: #333;
  text-decoration: none;
  border-bottom: 3px solid transparent;
}
.tabs .active { font-weight: 700; border-color: #444; }
.groups { display: flex; margin-top: 4px; }
.group { padding: 0 9px 0 11px; border-right: 2px solid #dcdcdc; display: flex; flex-direction: column; align-items: center; }
.group:first-child { padding-left: 10px; }
.group.wide { padding: 0 13px; }
.group.narrow { padding: 0 8px 0 7px; }
.group.last { border: 0; }
.tools { display: flex; gap: 11px; height: 32px; align-items: center; }
.label { gap: 2px; margin-top: 4px; height: 16px; white-space: pre; }
.selected { width: 40px; height: 40px; background: #dcecf5; border: 2px solid #a8d8ee; }

/* canvas */
main { flex: 1; position: relative; display: flex; flex-direction: column; justify-content: space-between; }
.model { position: absolute; inset: 0; width: 100%; height: 100%; }
.engraving {
  font: 82px "Liberation Sans", Arial, sans-serif;
  fill: #8a877e;
  stroke: #2b2a27;
  stroke-width: .8;
  filter: drop-shadow(-1px 0 0 #6b6962);
}
.dot { font-family: "Open Sans", sans-serif; }
.viewcube { position: absolute; top: 15px; right: 5px; font: 14px Roboto, sans-serif; text-anchor: middle; }
.cube-face { font-size: 12px; font-weight: 700; fill: #999ca3; }
.cube-x { fill: #f77; }
.cube-y { fill: #a6f7a6; }
.cube-z { fill: #88f; }

/* panels */
.panel { position: relative; width: 300px; margin-left: 4px; }
.browser { margin-top: 4px; }
.panel-head {
  display: flex;
  align-items: center;
  height: 25px;
  padding: 0 12px 0 6px;
  background: #f5f5f5;
  border: 1px solid #d9d9d9;
}
.panel-head h2 { flex: 1; margin-left: 14px; font: 12px/20px "Noto Sans", sans-serif; color: #444; }
.comments .panel-head { border-top: 0; }
.comments h2 { margin-left: 21px; padding-top: 1px; }
.tree { display: flex; flex-direction: column; gap: 4px; margin-top: 5px; }
.tree li { display: flex; align-items: center; height: 20px; padding-left: 37px; }
.tree .chev { margin-right: 11px; }
.tree .root { padding-left: 18px; }
.tree .root .chev { margin-right: 9px; }
.cell { display: flex; align-items: center; height: 20px; gap: 9px; padding: 0 16px 0 3px; background: #f5f5f5; }
.cell svg + span { margin-left: 5px; }
.cell.settings { padding-right: 24px; background: #e8e8e8; }
.root .cell { gap: 6px; padding-right: 8px; }
.root .cell .name {
  display: flex;
  align-items: center;
  gap: 14px;
  height: 20px;
  margin: 0 -2px 0 0;
  padding: 0 14px 0 4px;
  background: #d9d9d9;
}

.bottom { position: relative; display: flex; align-items: center; margin-bottom: 4px; }
.navbar {
  display: flex;
  justify-content: space-between;
  align-self: flex-start;
  width: 239px;
  height: 24px;
  margin: -1px auto 0;
  padding: 0 2px;
  background: #f5f5f5;
}
.navbar button { height: 23px; }
.navbar button svg + svg { margin-left: 1px; }
.assistant { width: 16px; margin: 0 13px 0 275px; }

/* timeline */
footer { height: 49px; background: #f5f5f5; }
.scroll { height: 7px; padding: 1px 5px; }
.thumb { width: 43%; height: 5px; border-radius: 3px; background: #dcdcdc; box-shadow: 0 0 0 1px #e9e9e9; }
.timeline { display: flex; height: 42px; }
.play { display: flex; width: 138px; height: 42px; padding: 1px 9px 0 4px; }
.play button { width: 25px; height: 42px; }
.features { display: flex; flex: 1; height: 35px; margin-left: 4px; padding-top: 9px; }
.features li {
  width: 24px;
  height: 26px;
  padding-left: 4px;
  background:
    linear-gradient(#c4c4c4, #c4c4c4) 12px 19px / 2px 5px no-repeat,
    linear-gradient(#c4c4c4, #c4c4c4) 0 24px / 24px 2px no-repeat;
}
.features li:first-child { background-position: 12px 19px, 12px 24px; }
.features::after {
  content: "";
  width: 8px;
  height: 2px;
  margin-top: 24px;
  background: repeating-linear-gradient(90deg, transparent 0 2px, #c4c4c4 2px 4px);
}
.prefs { width: 16px; margin-right: 13px; padding-top: 2px; }
```
FILE: timeline.js
```js
// Feature history in build order: S sketch, E extrude, L shell, C combine.
const buildOrder =
  "SELSESESESELSE" +
  "SESESESESSESESESSSESEEEEESESES" +
  "CEELEESESEEESESEESESESESEEEE";
const kinds = {
  S: ["t-sketch", "Sketch"],
  E: ["t-extrude", "Extrude"],
  L: ["t-shell", "Shell"],
  C: ["t-combine", "Combine"]
};
document.getElementById("features").innerHTML = [...buildOrder]
  .map(k => `<li><button aria-label="${kinds[k][1]}"><svg width="16" height="16"><use href="#${kinds[k][0]}"/></svg></button></li>`)
  .join("");
```
